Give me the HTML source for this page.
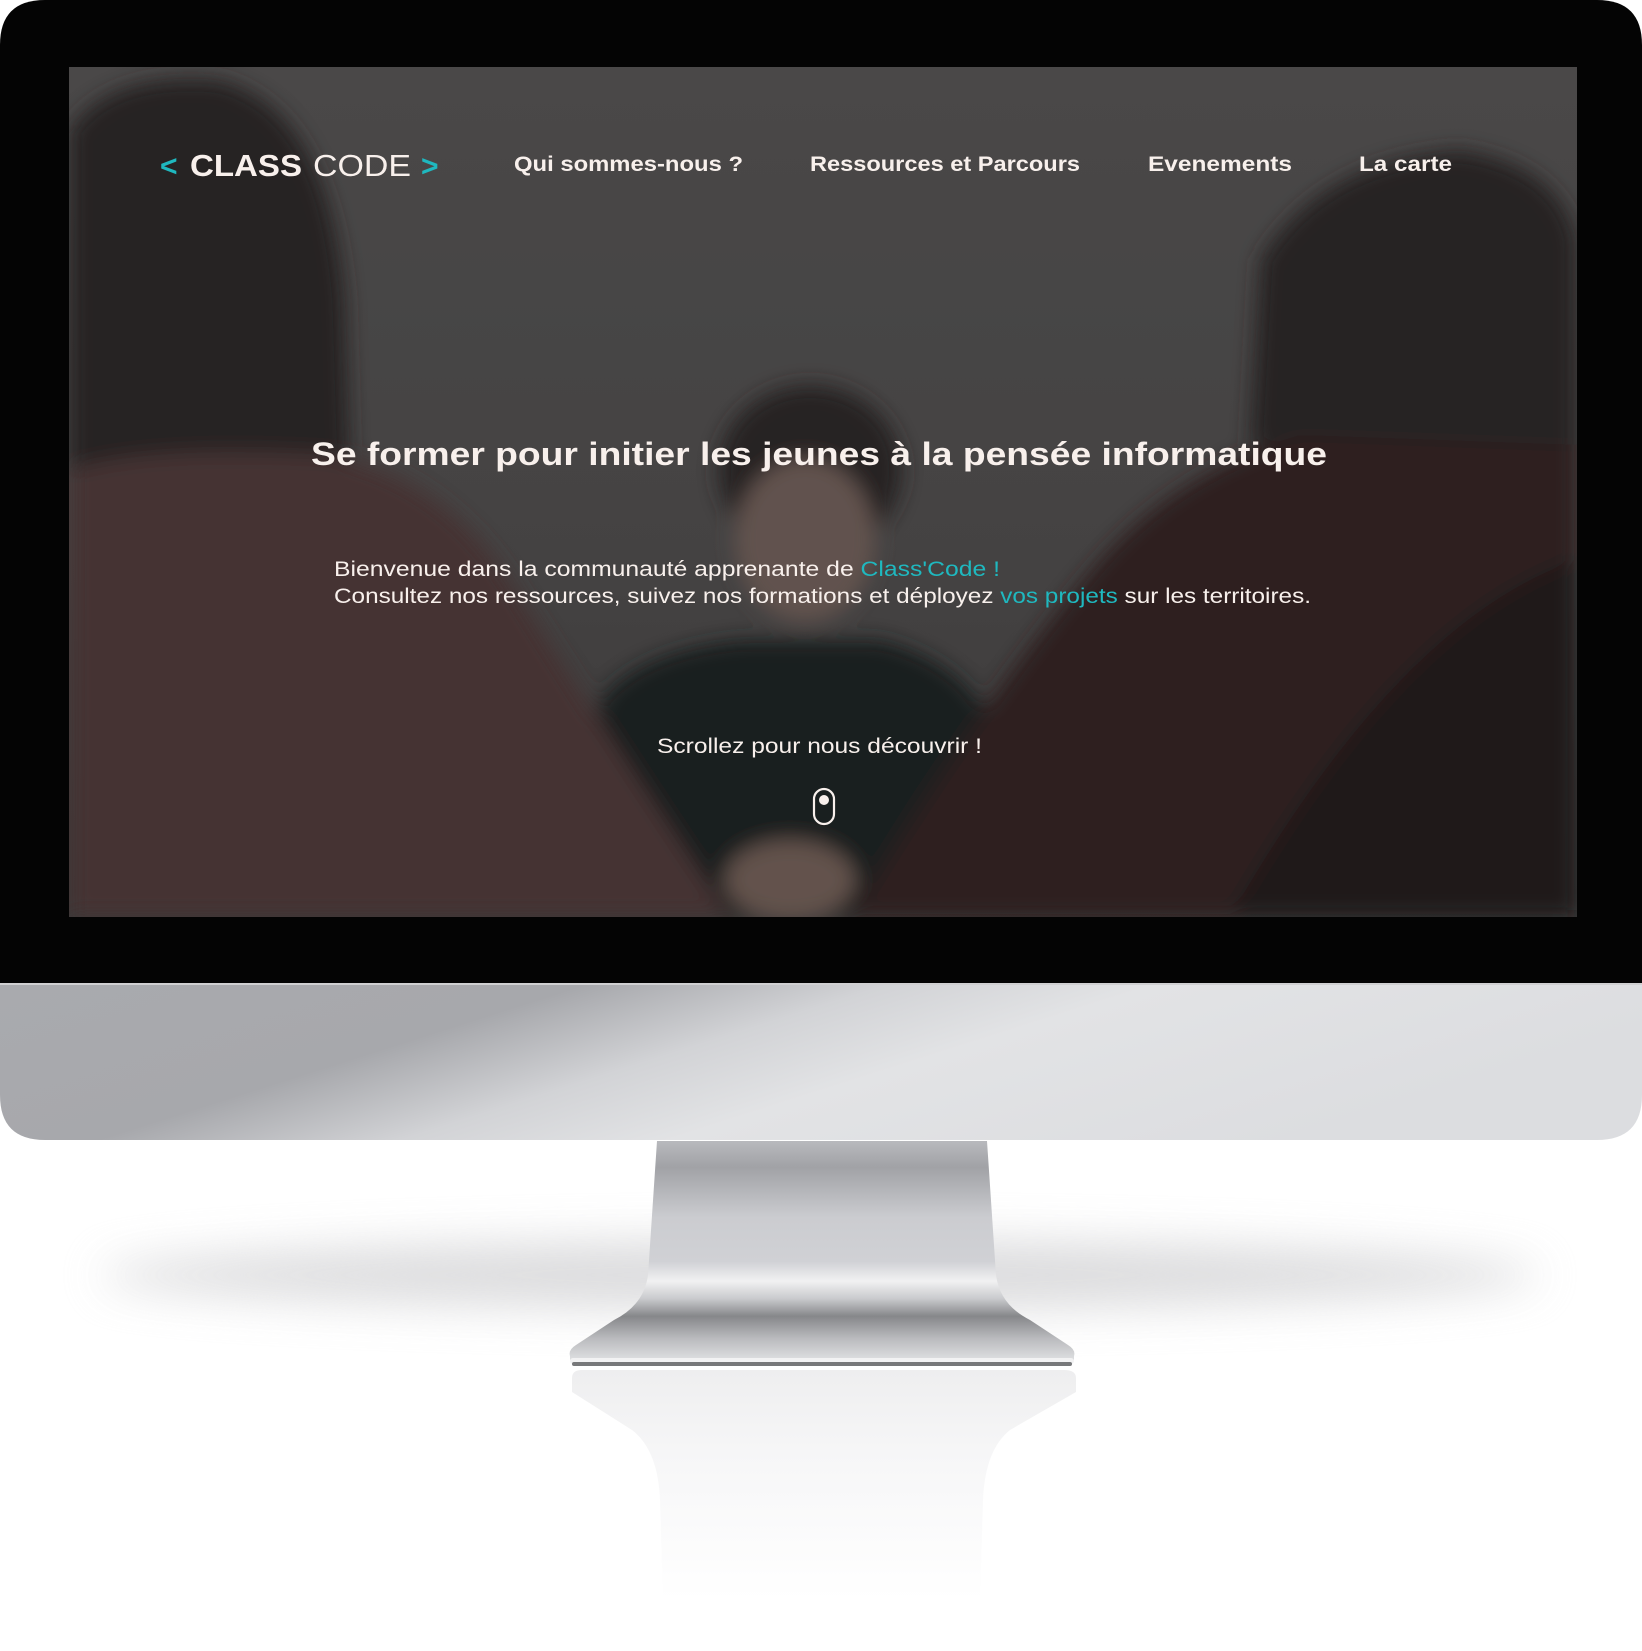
<!DOCTYPE html>
<html><head><meta charset="utf-8"><style>
html,body{margin:0;padding:0;background:#fff;width:1642px;height:1651px;overflow:hidden;position:relative}
.abs{position:absolute}
</style></head><body>
<div class="abs" style="left:100px;top:1240px;width:1440px;height:70px;border-radius:50%;background:#d6d6d8;filter:blur(22px);opacity:.85"></div>
<svg class="abs" style="left:0;top:0" width="1642" height="1651">
 <defs>
  <linearGradient id="refl" x1="0" y1="0" x2="0" y2="1">
   <stop offset="0" stop-color="#eeeeef"/><stop offset="0.35" stop-color="#f6f6f7"/><stop offset="1" stop-color="#fff"/>
  </linearGradient>
  <linearGradient id="stand" x1="0" y1="0" x2="0" y2="1">
   <stop offset="0" stop-color="#b8b9bd"/><stop offset="0.12" stop-color="#a1a2a6"/><stop offset="0.35" stop-color="#cbccd0"/><stop offset="0.55" stop-color="#d0d1d5"/><stop offset="0.64" stop-color="#f1f1f2"/><stop offset="0.72" stop-color="#c9cacd"/><stop offset="0.8" stop-color="#86878a"/><stop offset="0.9" stop-color="#b9babd"/><stop offset="1" stop-color="#dedfe1"/>
  </linearGradient>
  <linearGradient id="chin" x1="0" y1="0" x2="1" y2="0.3">
   <stop offset="0" stop-color="#a9aaae"/><stop offset="0.33" stop-color="#a7a8ac"/><stop offset="0.5" stop-color="#d2d3d6"/><stop offset="0.65" stop-color="#e2e3e5"/><stop offset="1" stop-color="#dcdde0"/>
  </linearGradient>
 </defs>
 <path d="M572 1378 Q572 1370 582 1370 L1064 1370 Q1076 1370 1076 1378 L1076 1392 L1010 1430 Q985 1450 983 1500 L980 1600 L663 1600 L660 1500 Q658 1450 632 1430 L572 1392 Z" fill="url(#refl)"/>
 <path d="M657 1141 L987 1141 L996 1275 Q1000 1305 1030 1320 L1068 1345 Q1076 1350 1074 1356 L1074 1360 L570 1360 L570 1356 Q568 1350 576 1345 L614 1320 Q644 1305 648 1275 Z" fill="url(#stand)"/>
 <rect x="570" y="1358" width="504" height="6" rx="3" fill="#f2f2f3"/>
 <rect x="572" y="1362" width="500" height="4" rx="2" fill="#77787a"/>
 <path d="M0 983 L1642 983 L1642 1095 Q1642 1140 1597 1140 L45 1140 Q0 1140 0 1095 Z" fill="url(#chin)"/>
 <rect x="0" y="983" width="1642" height="2" fill="#d0d0d2"/>
 <path d="M45 0 L1597 0 Q1642 0 1642 45 L1642 983 L0 983 L0 45 Q0 0 45 0 Z" fill="#040404"/>
</svg>
<svg class="abs" style="left:69px;top:67px" width="1508" height="850" viewBox="69 67 1508 850">
 <defs>
  <filter id="b" x="-20%" y="-20%" width="140%" height="140%"><feGaussianBlur stdDeviation="10"/></filter>
  <linearGradient id="bg" x1="0" y1="0" x2="0" y2="1"><stop offset="0" stop-color="#514f4f"/><stop offset="0.6" stop-color="#4a4848"/><stop offset="1" stop-color="#403e3e"/></linearGradient>
 </defs>
 <rect x="69" y="67" width="1508" height="850" fill="url(#bg)"/>
 <g filter="url(#b)">
  <ellipse cx="810" cy="470" rx="92" ry="85" fill="#2c2826"/>
  <ellipse cx="805" cy="540" rx="70" ry="82" fill="#6a5a54"/>
  <path d="M600 700 Q640 650 740 640 L880 640 Q960 660 990 720 L990 917 L600 917 Z" fill="#1d2321"/>
  <ellipse cx="790" cy="880" rx="65" ry="40" fill="#6c5a52"/>
  <path d="M69 130 Q110 70 220 80 Q330 110 345 300 L350 470 L69 480 Z" fill="#2a2828"/>
  <path d="M69 470 Q150 445 330 455 Q440 475 510 580 Q610 740 730 917 L69 917 Z" fill="#4c3839"/>
  <path d="M1260 260 Q1320 160 1460 150 Q1560 165 1577 240 L1577 450 L1250 445 Z" fill="#2a2626"/>
  <path d="M1577 445 L1300 435 Q1180 470 1100 560 Q980 700 850 917 L1577 917 Z" fill="#302224"/>
  <path d="M1577 560 Q1400 620 1230 917 L1577 917 Z" fill="#211b1c"/>
 </g>
 <rect x="69" y="67" width="1508" height="850" fill="#000" opacity="0.08"/>
 <g font-family="'Liberation Sans', sans-serif" fill="#f8f0ec">
  <text x="160" y="176" font-size="30" font-weight="bold" fill="#1fb8bf">&lt;</text>
  <text x="190" y="176" font-size="31" font-weight="bold" textLength="112" lengthAdjust="spacingAndGlyphs">CLASS</text>
  <text x="313" y="176" font-size="31" textLength="98" lengthAdjust="spacingAndGlyphs">CODE</text>
  <text x="421" y="176" font-size="30" font-weight="bold" fill="#1fb8bf">&gt;</text>
  <g font-size="21" font-weight="bold">
   <text x="514" y="171" textLength="229" lengthAdjust="spacingAndGlyphs">Qui sommes-nous ?</text>
   <text x="810" y="171" textLength="270" lengthAdjust="spacingAndGlyphs">Ressources et Parcours</text>
   <text x="1148" y="171" textLength="144" lengthAdjust="spacingAndGlyphs">Evenements</text>
   <text x="1359" y="171" textLength="93" lengthAdjust="spacingAndGlyphs">La carte</text>
  </g>
  <text x="311" y="465" font-size="32" font-weight="bold" textLength="1016" lengthAdjust="spacingAndGlyphs">Se former pour initier les jeunes à la pensée informatique</text>
  <g font-size="21">
   <text x="334" y="576" textLength="666" lengthAdjust="spacingAndGlyphs">Bienvenue dans la communauté apprenante de <tspan fill="#1fb8bf">Class'Code !</tspan></text>
   <text x="334" y="603" textLength="977" lengthAdjust="spacingAndGlyphs">Consultez nos ressources, suivez nos formations et déployez <tspan fill="#1fb8bf">vos projets</tspan> sur les territoires.</text>
   <text x="657" y="753" textLength="325" lengthAdjust="spacingAndGlyphs">Scrollez pour nous découvrir !</text>
  </g>
 </g>
 <rect x="814" y="789" width="20" height="35" rx="10" fill="none" stroke="#f8f0ec" stroke-width="2.2"/>
 <circle cx="824" cy="800" r="5" fill="#f8f0ec"/>
</svg>
</body></html>
